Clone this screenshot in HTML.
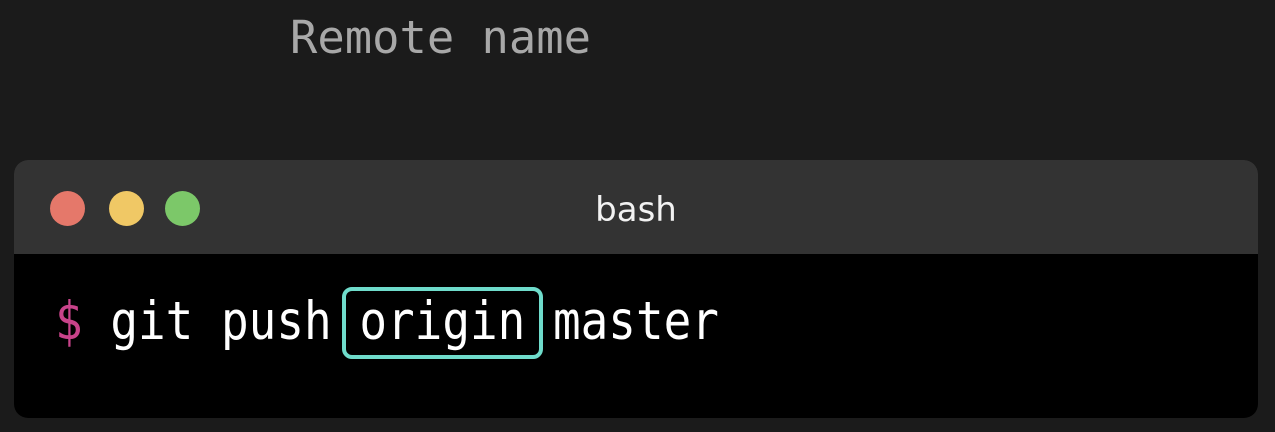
<!DOCTYPE html>
<html><head><style>
html,body{margin:0;padding:0;width:1275px;height:432px;background:#1b1b1b;overflow:hidden;position:relative;font-family:"DejaVu Sans Mono","Liberation Mono",monospace}
.t{position:absolute;white-space:pre}
#rn{left:290px;top:10px;font-size:45px;color:#a8a8a8;line-height:56px;transform:scaleX(1.01);transform-origin:0 0}
#win{position:absolute;left:14px;top:160px;width:1244px;height:258px;border-radius:14px;background:#000;overflow:hidden}
#bar{position:absolute;left:0;top:0;width:100%;height:94px;background:#333}
.d{position:absolute;top:31px;width:35px;height:35px;border-radius:50%}
#bash{position:absolute;left:0;width:1244px;top:30px;text-align:center;font-family:"DejaVu Sans","Liberation Sans",sans-serif;font-size:34px;color:#f2f2f2}
#cmd{left:55px;top:287px;font-size:53px;color:#fff;line-height:70px;transform:scaleX(0.867);transform-origin:0 0}
#box{position:absolute;left:342px;top:287px;width:193px;height:64px;border:4px solid #6fdccb;border-radius:10px}
</style></head><body>
<div class="t" id="rn">Remote name</div>
<div id="win"><div id="bar">
<div class="d" style="left:36px;background:#e5786a"></div>
<div class="d" style="left:95px;background:#f0c865"></div>
<div class="d" style="left:151px;background:#7cc869"></div>
<div id="bash">bash</div>
</div></div>
<div id="box"></div>
<div class="t" id="cmd"><span style="color:#c8438a">$</span> git push origin master</div>
</body></html>
